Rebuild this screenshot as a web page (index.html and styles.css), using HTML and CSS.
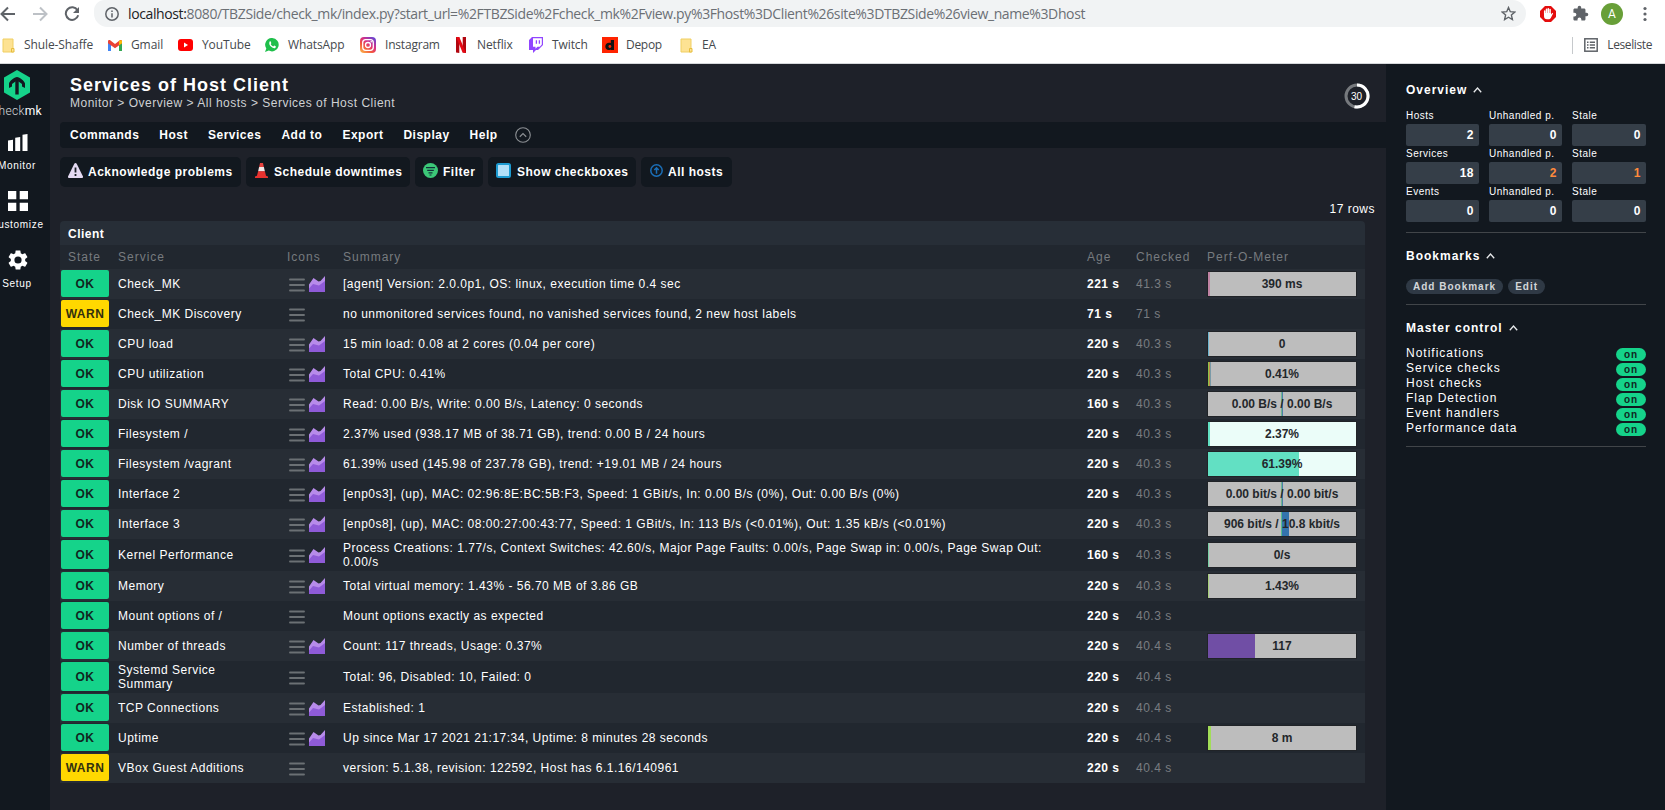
FILE: index.html
```html
<!DOCTYPE html>
<html lang="en">
<head>
<meta charset="utf-8">
<title>Services of Host Client</title>
<link rel="stylesheet" href="styles.css">
</head>
<body>
<svg width="0" height="0" class="defs">
  <symbol id="menu" viewBox="0 0 16 16"><path d="M1 2.500h14M1 8h14M1 13.500h14" stroke="#6b7074" stroke-width="1.900" stroke-linecap="round"/></symbol>
  <symbol id="graph" viewBox="0 0 16 16"><path d="M0 8.500L4.500 2l5 3.500 2-.5L16 0v16H0z" fill="#b78bea"/><path d="M0 12.500L4 8l6 1.500L16 5v11H0z" fill="#8f5bd8"/></symbol>
  <symbol id="caret" viewBox="0 0 9 6"><path d="M.8 5.200L4.500 1l3.700 4.200" fill="none" stroke="#e8eaec" stroke-width="1.300"/></symbol>
  <symbol id="folder" viewBox="0 0 13 15"><path d="M1 1h10v13H1z" fill="#fde293" stroke="#f0cf62"/><path d="M9.500 10.500h2.500v3.500h-2.500z" fill="#fde293" stroke="#e6bd3c"/></symbol>
</svg>

<header class="browser">
  <div class="toolbar">
    <svg class="nav-ic" width="16" height="16" viewBox="0 0 16 16"><path d="M15 8H2M8 1.500L1.500 8 8 14.500" fill="none" stroke="#5f6368" stroke-width="2"/></svg>
    <svg class="nav-ic" width="16" height="16" viewBox="0 0 16 16"><path d="M1 8h13M8 1.500L14.500 8 8 14.500" fill="none" stroke="#bdc1c6" stroke-width="2"/></svg>
    <svg class="nav-ic" width="16" height="16" viewBox="0 0 16 16"><path d="M13.500 4.300A6.300 6.300 0 1 0 14.200 9.300" fill="none" stroke="#5f6368" stroke-width="2"/><path d="M15 1v6H9z" fill="#5f6368"/></svg>
    <div class="omnibox">
      <svg width="14" height="14" viewBox="0 0 14 14"><circle cx="7" cy="7" r="6.200" fill="none" stroke="#5f6368" stroke-width="1.500"/><path d="M7 6.200v4.300M7 3.400v1.500" stroke="#5f6368" stroke-width="1.500"/></svg>
      <span class="url"><b>localhost:</b>8080/TBZSide/check_mk/index.py?start_url=%2FTBZSide%2Fcheck_mk%2Fview.py%3Fhost%3DClient%26site%3DTBZSide%26view_name%3Dhost</span>
      <svg class="star" width="15" height="15" viewBox="0 0 15 15"><path d="M7.500 1.500l1.800 4.200 4.500.4-3.400 3 1 4.400-3.900-2.300-3.900 2.300 1-4.400-3.400-3 4.500-.4z" fill="none" stroke="#5f6368" stroke-width="1.400"/></svg>
    </div>
    <div class="exts">
      <svg width="16" height="16" viewBox="0 0 16 16"><path d="M5 0h6l5 5v6l-5 5H5l-5-5V5z" fill="#e40d0d"/><path d="M4.700 8V5M6.500 7.500V3.300M8.300 7.500V2.800M10.100 7.500V3.600" stroke="#fff" stroke-width="1.500" stroke-linecap="round"/><path d="M4 7h7v1.500l1.300-1.700.8.6-2.300 4.600c-.5 1-1.300 1.300-2.400 1.300H7c-2 0-3-1.300-3-3z" fill="#fff"/></svg>
      <svg width="17" height="17" viewBox="0 0 24 24"><path d="M20.500 11H19V7c0-1.100-.9-2-2-2h-4V3.500a2.500 2.500 0 0 0-5 0V5H4c-1.100 0-2 .9-2 2v3.800h1.500a2.700 2.700 0 0 1 0 5.400H2V20c0 1.100.9 2 2 2h3.800v-1.500a2.700 2.700 0 0 1 5.400 0V22H17c1.100 0 2-.9 2-2v-4h1.500a2.500 2.500 0 0 0 0-5z" fill="#5f6368"/></svg>
      <span class="avatar">A</span>
      <svg width="4" height="16" viewBox="0 0 4 16"><circle cx="2" cy="2.500" r="1.600" fill="#5f6368"/><circle cx="2" cy="8" r="1.600" fill="#5f6368"/><circle cx="2" cy="13.500" r="1.600" fill="#5f6368"/></svg>
    </div>
  </div>
  <div class="bookmarks">
    <span class="bm bm-school"><svg width="13" height="15"><use href="#folder"/></svg>Shule-Shaffe</span>
    <span class="bm bm-gmail"><svg width="14" height="11" viewBox="0 0 14 11"><path d="M0 1.500V11h3V4z" fill="#4285f4"/><path d="M14 1.500V11h-3V4z" fill="#34a853"/><path d="M0 1.500C0 0 1.500-.3 2.500.5L7 4 11.500.5C12.500-.3 14 0 14 1.500v1.700L7 8.300 0 3.200z" fill="#ea4335"/><path d="M11 1v4.300l3-2.100V1.500C14 0 12.500-.3 11 1z" fill="#fbbc04"/></svg>Gmail</span>
    <span class="bm bm-youtube"><svg width="15" height="12" viewBox="0 0 15 12"><rect width="15" height="12" rx="3" fill="#f00"/><path d="M6 3.500v5L10 6z" fill="#fff"/></svg>YouTube</span>
    <span class="bm bm-whatsapp"><svg width="14" height="14" viewBox="0 0 14 14"><path d="M7.200 0a6.700 6.700 0 1 1-3.400 12.600L0 14l1.300-3.600A6.700 6.700 0 0 1 7.200 0z" fill="#1fbf4b"/><path d="M4.600 3.600c.4-.5 1-.4 1.200.1l.5 1.200c.1.400-.6.900-.6 1.200.4 1 1.500 2 2.500 2.300.4 0 .7-.9 1.100-.8l1.300.7c.6.300.2 1.200-.4 1.600-1 .6-2.700 0-4-1.100C4.600 7.600 3.600 5.600 4.600 3.600z" fill="#fff"/></svg>WhatsApp</span>
    <span class="bm bm-instagram"><svg width="16" height="16" viewBox="0 0 16 16"><defs><linearGradient id="ig" x1="0" y1="1" x2=".8" y2="0"><stop offset="0" stop-color="#fdc04a"/><stop offset=".4" stop-color="#f2543f"/><stop offset=".65" stop-color="#d62f86"/><stop offset="1" stop-color="#6a45d0"/></linearGradient></defs><rect width="16" height="16" rx="4" fill="url(#ig)"/><rect x="2.700" y="2.700" width="10.600" height="10.600" rx="3" fill="none" stroke="#fff" stroke-width="1.300"/><circle cx="8" cy="8" r="2.500" fill="none" stroke="#fff" stroke-width="1.300"/><circle cx="11.200" cy="4.800" r=".8" fill="#fff"/></svg>Instagram</span>
    <span class="bm bm-netflix"><svg width="10" height="16" viewBox="0 0 10 16"><path d="M0 0h3.300v16L0 15.600zM6.700 0H10v16l-3.300-.4z" fill="#b1060f"/><path d="M0 0h3.300L10 16l-3.400-.4z" fill="#e50914"/></svg>Netflix</span>
    <span class="bm bm-twitch"><svg width="14" height="16" viewBox="0 0 14 16"><path d="M3 0h11v8l-5 5H7l-3 3v-3H0V3z" fill="#9146ff"/><path d="M4 1.200h8.800v6.300l-2 2.200H8.500l-2 2v-2H4z" fill="#fff"/><path d="M7.400 3.300v3.500M10.400 3.300v3.500" stroke="#9146ff" stroke-width="1.300"/></svg>Twitch</span>
    <span class="bm bm-depop"><svg width="16" height="16" viewBox="0 0 16 16"><rect width="16" height="16" fill="#ff2300"/><path d="M8.800 3H12v10H8.800v-.6C6 14 3.300 12.300 3.300 9.400S6 4.900 8.800 6z" fill="#111"/><circle cx="7.900" cy="9.500" r="1.400" fill="#ff2300"/></svg>Depop</span>
    <span class="bm bm-ea"><svg width="13" height="15"><use href="#folder"/></svg>EA</span>
    <span class="reading"><svg width="14" height="14" viewBox="0 0 14 14"><rect x=".8" y=".8" width="12.400" height="12.400" fill="none" stroke="#5f6368" stroke-width="1.500"/><path d="M3 4.200h1.500M3 7h1.500M3 9.800h1.500M5.800 4.200H11M5.800 7H11M5.800 9.800H11" stroke="#5f6368" stroke-width="1.400"/></svg>Leseliste</span>
  </div>
</header>

<div class="app">
  <nav class="nav">
    <div class="nav-inner">
      <svg class="logo" width="26" height="30" viewBox="0 0 26 30"><path d="M13 0l13 7.500v15L13 30 0 22.500v-15z" fill="#15d38a"/><path d="M13 24.500V9" stroke="#12181f" stroke-width="3.400"/><path d="M5 18v-4.500C5 11.500 10.500 7 13 7s8 4.500 8 6.500V18l-3-1.500V14l-3.500-2.600h-3L8 14v2.500z" fill="#12181f"/></svg>
      <div class="brand">check<b>mk</b></div>
      <svg class="ic-monitor" width="20" height="17" viewBox="0 0 20 17"><path d="M0 6.500l5-.8V17H0zM7.200 3.700l5-.8V17h-5zM14.500.8l5-.8v17h-5z" fill="#fff"/></svg>
      <div class="nav-label">Monitor</div>
      <svg class="ic-custom" width="20" height="20" viewBox="0 0 20 20"><path d="M0 0h8.300v8.300H0zM11.700 0H20v8.300h-8.300zM0 11.700h8.300V20H0zM11.700 11.700H20V20h-8.300z" fill="#fff"/></svg>
      <div class="nav-label">Customize</div>
      <svg class="ic-setup" width="20" height="20" viewBox="2 2 20 20"><path d="M19.140 12.940c.040-.3.060-.610.060-.940 0-.320-.020-.640-.070-.940l2.030-1.580c.180-.140.230-.410.120-.610l-1.920-3.320c-.120-.220-.370-.290-.590-.220l-2.390.960c-.500-.380-1.030-.700-1.620-.940l-.360-2.540c-.040-.240-.240-.410-.480-.410h-3.840c-.240 0-.430.170-.470.410l-.360 2.540c-.590.240-1.130.570-1.620.940l-2.390-.960c-.220-.080-.470 0-.590.220L2.740 8.870c-.120.210-.080.470.120.610l2.030 1.580c-.050.3-.090.630-.090.940s.020.640.070.940l-2.030 1.580c-.180.140-.230.410-.120.610l1.920 3.320c.120.220.370.290.590.220l2.390-.960c.500.380 1.030.700 1.620.940l.36 2.540c.050.240.240.410.480.410h3.840c.240 0 .440-.170.470-.410l.360-2.540c.590-.240 1.130-.560 1.620-.940l2.390.960c.220.080.470 0 .590-.220l1.920-3.320c.120-.220.070-.470-.120-.610zM12 15.600A3.600 3.600 0 1 1 12 8.400a3.600 3.600 0 0 1 0 7.200z" fill="#fff"/></svg>
      <div class="nav-label">Setup</div>
    </div>
  </nav>

  <main class="main">
    <div class="head">
      <div>
        <h1>Services of Host Client</h1>
        <div class="crumbs">Monitor &gt; Overview &gt; All hosts &gt; Services of Host Client</div>
      </div>
      <svg class="timer" width="26" height="26" viewBox="0 0 26 26"><circle cx="13" cy="13" r="11" fill="none" stroke="#76797d" stroke-width="3"/><path d="M13 2A11 11 0 1 1 10.500 23.700" fill="none" stroke="#fff" stroke-width="3"/><text x="12.500" y="17.200">30</text></svg>
    </div>
    <div class="menubar">
      <span>Commands</span><span>Host</span><span>Services</span><span>Add to</span><span>Export</span><span>Display</span><span>Help</span>
      <svg width="16" height="16" viewBox="0 0 16 16"><circle cx="8" cy="8" r="7.300" fill="none" stroke="#8c9094" stroke-width="1.100"/><path d="M4.800 9.700L8 6.600l3.200 3.100" fill="none" stroke="#8c9094" stroke-width="1.200"/></svg>
    </div>
    <div class="actions">
      <span class="action a-ack"><svg width="15" height="15" viewBox="0 0 15 15"><path d="M7.500 0c.6 0 1 .3 1.300.9L15 13.500c.3.8 0 1.500-1 1.500H1c-1 0-1.300-.7-1-1.500L6.200.9C6.500.3 6.900 0 7.500 0z" fill="#e4daf2"/><path d="M7.500 4.500v5M7.500 11v2" stroke="#1b1f26" stroke-width="1.800"/></svg>Acknowledge problems</span>
      <span class="action a-down"><svg width="13" height="15" viewBox="0 0 13 15"><path d="M5 0h3l.9 4.300H4.100z" fill="#e8423f"/><path d="M4.100 4h4.800l1 4.500H3.100z" fill="#f1e8e8"/><path d="M3.100 8.200h6.800l1.100 4.600 2 .7V15H0v-1.500l2-.7z" fill="#e8322f"/></svg>Schedule downtimes</span>
      <span class="action a-filter"><svg width="15" height="15" viewBox="0 0 15 15"><circle cx="7.500" cy="7.500" r="7.500" fill="#3cc878"/><path d="M3 4.700h9M4.200 7.300h6.600M5.500 9.800h4M6.500 12h2" stroke="#12303a" stroke-width="1.200"/></svg>Filter</span>
      <span class="action a-check"><svg width="15" height="15" viewBox="0 0 15 15"><rect x="1" y="1" width="13" height="13" rx="1.500" fill="#b3e0f8" stroke="#1d9bd1" stroke-width="2"/></svg>Show checkboxes</span>
      <span class="action a-hosts"><svg width="13" height="13" viewBox="0 0 13 13"><circle cx="6.500" cy="6.500" r="5.700" fill="none" stroke="#1b6fb8" stroke-width="1.500"/><path d="M6.500 9.800V4M4.300 6l2.200-2.200L8.700 6" fill="none" stroke="#1b6fb8" stroke-width="1.500"/></svg>All hosts</span>
    </div>
    <div class="rowcount">17 rows</div>

    <table class="services">
      <colgroup><col class="c-state"><col class="c-service"><col class="c-icons"><col class="c-summary"><col class="c-age"><col class="c-checked"><col class="c-perf"></colgroup>
      <tr class="group"><th colspan="7">Client</th></tr>
      <tr class="cols"><th>State</th><th>Service</th><th>Icons</th><th>Summary</th><th>Age</th><th>Checked</th><th>Perf-O-Meter</th></tr>
      <tr class="odd"><td><i class="ok">OK</i></td><td>Check_MK</td><td class="icons"><svg><use href="#menu"/></svg><svg><use href="#graph"/></svg></td><td>[agent] Version: 2.0.0p1, OS: linux, execution time 0.4 sec</td><td class="age">221 s</td><td class="chk">41.3 s</td><td><div class="perf p-mk">390 ms</div></td></tr>
      <tr><td><i class="warn">WARN</i></td><td>Check_MK Discovery</td><td class="icons"><svg><use href="#menu"/></svg></td><td>no unmonitored services found, no vanished services found, 2 new host labels</td><td class="age">71 s</td><td class="chk">71 s</td><td></td></tr>
      <tr class="odd"><td><i class="ok">OK</i></td><td>CPU load</td><td class="icons"><svg><use href="#menu"/></svg><svg><use href="#graph"/></svg></td><td>15 min load: 0.08 at 2 cores (0.04 per core)</td><td class="age">220 s</td><td class="chk">40.3 s</td><td><div class="perf p-load">0</div></td></tr>
      <tr><td><i class="ok">OK</i></td><td>CPU utilization</td><td class="icons"><svg><use href="#menu"/></svg><svg><use href="#graph"/></svg></td><td>Total CPU: 0.41%</td><td class="age">220 s</td><td class="chk">40.3 s</td><td><div class="perf p-cpu">0.41%</div></td></tr>
      <tr class="odd"><td><i class="ok">OK</i></td><td>Disk IO SUMMARY</td><td class="icons"><svg><use href="#menu"/></svg><svg><use href="#graph"/></svg></td><td>Read: 0.00 B/s, Write: 0.00 B/s, Latency: 0 seconds</td><td class="age">160 s</td><td class="chk">40.3 s</td><td><div class="perf p-mid">0.00 B/s / 0.00 B/s</div></td></tr>
      <tr><td><i class="ok">OK</i></td><td>Filesystem /</td><td class="icons"><svg><use href="#menu"/></svg><svg><use href="#graph"/></svg></td><td>2.37% used (938.17 MB of 38.71 GB), trend: 0.00 B / 24 hours</td><td class="age">220 s</td><td class="chk">40.3 s</td><td><div class="perf p-fs1">2.37%</div></td></tr>
      <tr class="odd"><td><i class="ok">OK</i></td><td>Filesystem /vagrant</td><td class="icons"><svg><use href="#menu"/></svg><svg><use href="#graph"/></svg></td><td>61.39% used (145.98 of 237.78 GB), trend: +19.01 MB / 24 hours</td><td class="age">220 s</td><td class="chk">40.3 s</td><td><div class="perf p-fs2">61.39%</div></td></tr>
      <tr><td><i class="ok">OK</i></td><td>Interface 2</td><td class="icons"><svg><use href="#menu"/></svg><svg><use href="#graph"/></svg></td><td>[enp0s3], (up), MAC: 02:96:8E:BC:5B:F3, Speed: 1 GBit/s, In: 0.00 B/s (0%), Out: 0.00 B/s (0%)</td><td class="age">220 s</td><td class="chk">40.3 s</td><td><div class="perf p-mid">0.00 bit/s / 0.00 bit/s</div></td></tr>
      <tr class="odd"><td><i class="ok">OK</i></td><td>Interface 3</td><td class="icons"><svg><use href="#menu"/></svg><svg><use href="#graph"/></svg></td><td>[enp0s8], (up), MAC: 08:00:27:00:43:77, Speed: 1 GBit/s, In: 113 B/s (&lt;0.01%), Out: 1.35 kB/s (&lt;0.01%)</td><td class="age">220 s</td><td class="chk">40.3 s</td><td><div class="perf p-if3">906 bit/s / 10.8 kbit/s</div></td></tr>
      <tr class="tall"><td><i class="ok">OK</i></td><td>Kernel Performance</td><td class="icons"><svg><use href="#menu"/></svg><svg><use href="#graph"/></svg></td><td>Process Creations: 1.77/s, Context Switches: 42.60/s, Major Page Faults: 0.00/s, Page Swap in: 0.00/s, Page Swap Out: 0.00/s</td><td class="age">160 s</td><td class="chk">40.3 s</td><td><div class="perf p-kern">0/s</div></td></tr>
      <tr class="odd"><td><i class="ok">OK</i></td><td>Memory</td><td class="icons"><svg><use href="#menu"/></svg><svg><use href="#graph"/></svg></td><td>Total virtual memory: 1.43% - 56.70 MB of 3.86 GB</td><td class="age">220 s</td><td class="chk">40.3 s</td><td><div class="perf p-mem">1.43%</div></td></tr>
      <tr><td><i class="ok">OK</i></td><td>Mount options of /</td><td class="icons"><svg><use href="#menu"/></svg></td><td>Mount options exactly as expected</td><td class="age">220 s</td><td class="chk">40.3 s</td><td></td></tr>
      <tr class="odd"><td><i class="ok">OK</i></td><td>Number of threads</td><td class="icons"><svg><use href="#menu"/></svg><svg><use href="#graph"/></svg></td><td>Count: 117 threads, Usage: 0.37%</td><td class="age">220 s</td><td class="chk">40.4 s</td><td><div class="perf p-thr">117</div></td></tr>
      <tr class="tall"><td><i class="ok">OK</i></td><td>Systemd Service<br>Summary</td><td class="icons"><svg><use href="#menu"/></svg></td><td>Total: 96, Disabled: 10, Failed: 0</td><td class="age">220 s</td><td class="chk">40.4 s</td><td></td></tr>
      <tr class="odd"><td><i class="ok">OK</i></td><td>TCP Connections</td><td class="icons"><svg><use href="#menu"/></svg><svg><use href="#graph"/></svg></td><td>Established: 1</td><td class="age">220 s</td><td class="chk">40.4 s</td><td></td></tr>
      <tr><td><i class="ok">OK</i></td><td>Uptime</td><td class="icons"><svg><use href="#menu"/></svg><svg><use href="#graph"/></svg></td><td>Up since Mar 17 2021 21:17:34, Uptime: 8 minutes 28 seconds</td><td class="age">220 s</td><td class="chk">40.4 s</td><td><div class="perf p-up">8 m</div></td></tr>
      <tr class="odd"><td><i class="warn">WARN</i></td><td>VBox Guest Additions</td><td class="icons"><svg><use href="#menu"/></svg></td><td>version: 5.1.38, revision: 122592, Host has 6.1.16/140961</td><td class="age">220 s</td><td class="chk">40.4 s</td><td></td></tr>
    </table>
  </main>

  <aside class="side">
    <section class="snap overview">
      <h2>Overview <svg width="9" height="6"><use href="#caret"/></svg></h2>
      <div class="tiles">
        <div>Hosts<b>2</b></div><div>Unhandled p.<b>0</b></div><div>Stale<b>0</b></div>
        <div>Services<b>18</b></div><div>Unhandled p.<b class="hot">2</b></div><div>Stale<b class="hot">1</b></div>
        <div>Events<b>0</b></div><div>Unhandled p.<b>0</b></div><div>Stale<b>0</b></div>
      </div>
    </section>
    <section class="snap marks">
      <h2>Bookmarks <svg width="9" height="6"><use href="#caret"/></svg></h2>
      <div class="pills"><span>Add Bookmark</span><span>Edit</span></div>
    </section>
    <section class="snap master">
      <h2>Master control <svg width="9" height="6"><use href="#caret"/></svg></h2>
      <div class="switches">
        <div>Notifications<b>on</b></div>
        <div>Service checks<b>on</b></div>
        <div>Host checks<b>on</b></div>
        <div>Flap Detection<b>on</b></div>
        <div>Event handlers<b>on</b></div>
        <div>Performance data<b>on</b></div>
      </div>
    </section>
  </aside>
</div>
</body>
</html>
```

FILE: styles.css
```css
* { box-sizing: border-box; }
body {
  margin: 0;
  width: 1665px;
  height: 810px;
  overflow: hidden;
  background: #fff;
  color: #fff;
  font: 12px/14px "Liberation Sans", Arial, sans-serif;
  letter-spacing: .5px;
}
svg { display: block; flex: none; }
.defs { position: absolute; }

/* browser chrome */
.browser {
  height: 64px;
  border-bottom: 1px solid #d6d8db;
  color: #45494d;
  font-family: "Open Sans", "Noto Sans", sans-serif;
  letter-spacing: 0;
}
.toolbar { display: flex; align-items: center; height: 27px; }
.nav-ic { margin-right: 16px; }
.nav-ic:nth-child(3) { margin-right: 14px; }
.omnibox {
  display: flex;
  align-items: center;
  width: 1432px;
  height: 27px;
  padding: 0 10px 0 11px;
  background: #f1f3f4;
  border-radius: 11px 14px 14px 14px;
}
.url { margin-left: 9px; font-size: 14px; line-height: 18px; color: #6b6f74; letter-spacing: -.38px; white-space: nowrap; }
.url b { font-weight: 400; color: #202124; }
.star { margin-left: auto; }
.exts { display: flex; align-items: center; padding-left: 14px; }
.exts svg:nth-child(2) { margin: 0 12px 0 16px; }
.avatar {
  width: 22px; height: 22px; margin-right: 20px;
  border-radius: 50%; background: #689f38; color: #fff;
  text-align: center; font: 12px/22px Roboto, sans-serif;
}
.bookmarks { display: flex; align-items: center; height: 36px; padding-left: 2px; font-size: 12px; letter-spacing: -.1px; }
.bm { display: flex; align-items: center; white-space: nowrap; }
.bm svg { margin-right: 9px; }
.bm-school { width: 106px; }
.bm-gmail { width: 70px; }
.bm-youtube { width: 87px; }
.bm-whatsapp { width: 95px; }
.bm-instagram { width: 96px; letter-spacing: -.2px; }
.bm-netflix { width: 73px; }
.bm-twitch { width: 73px; }
.bm-depop { width: 78px; letter-spacing: -.3px; }
.bm-netflix svg { margin-right: 11px; }
.bm-depop svg { margin-right: 8px; }
.reading {
  display: flex; align-items: center; gap: 9px;
  height: 17px; margin-left: auto; padding: 0 13px 0 11px;
  border-left: 1px solid #c6c9cc; letter-spacing: -.4px;
}

/* application frame */
.app { display: flex; height: 746px; background: #1e2129; }
.nav { width: 50px; overflow: hidden; background: #12181f; }
.nav-inner { display: flex; flex-direction: column; align-items: center; width: 66px; margin-left: -16px; padding-top: 6px; }
.brand { margin-top: 3px; font: 300 12px/16px Roboto, sans-serif; letter-spacing: .3px; color: #d8dadd; }
.brand b { font-weight: 400; color: #fff; }
.ic-monitor { margin: 15px 0 8px 1px; }
.ic-custom { margin: 18px 0 7px 1px; }
.ic-setup { margin: 18px 0 7px 1px; }
.nav-label { font-size: 10px; line-height: 14px; letter-spacing: .7px; }

.main { width: 1336px; padding-left: 10px; }
.head { display: flex; justify-content: space-between; height: 58px; padding: 10px 16px 0 10px; }
h1 { margin: 0; font-size: 18px; line-height: 22px; letter-spacing: 1px; }
.crumbs { line-height: 14px; color: #cfd1d4; }
.timer { margin-top: 9px; }
.timer text { fill: #fff; font-size: 10px; letter-spacing: 0; text-anchor: middle; }
.menubar {
  display: flex; align-items: center; gap: 20px; height: 26px; padding: 0 10px;
  background: #12181f; font-weight: 700; border-radius: 4px 0 0 4px;
}
.menubar svg { margin-left: -3px; }
.actions { display: flex; gap: 5px; margin-top: 9px; }
.action {
  display: flex; align-items: center; height: 30px; padding-left: 8px;
  border-radius: 5px; background: #12181f; font-weight: 700; white-space: nowrap;
}
.action svg { margin: -3px 5px 0 0; }
.a-ack { width: 181px; }
.a-down { width: 164px; }
.a-down svg { margin: -3px 6px 0 1px; }
.a-filter { width: 68px; }
.a-check { width: 148px; }
.a-check svg { margin-right: 6px; }
.a-hosts { width: 91px; }
.a-hosts svg { margin: -3px 5px 0 1px; }
.rowcount { height: 34px; padding: 15px 11px 0 0; text-align: right; }

/* service table */
.services { width: 1305px; table-layout: fixed; border-collapse: collapse; }
.c-state { width: 50px; } .c-service { width: 169px; } .c-icons { width: 56px; }
.c-summary { width: 744px; } .c-age { width: 49px; } .c-checked { width: 71px; } .c-perf { width: 166px; }
td, th { padding: 0 0 0 8px; text-align: left; vertical-align: middle; height: 30px; }
td:first-child { padding: 1px 1px 2px 1px; }
td:nth-child(4) { padding-right: 35px; }
tr { background: #21272f; }
tr.odd { background: #272d35; }
tr.tall td { height: 32px; }
.services .group { background: #272e37; }
.group th { height: 24px; padding: 1px 0 0 8px; border-radius: 4px 4px 0 0; letter-spacing: .5px; }
.cols th { height: 24px; font-weight: 400; letter-spacing: 1px; color: #777b7f; }
td i {
  display: flex; align-items: center; justify-content: center; width: 48px; height: 27px;
  border-radius: 2px; color: #10261f; font-style: normal; font-weight: 700;
}
.tall i { height: 29px; }
.ok { background: #15d38a; }
td .warn { background: #ffd800; color: #33300f; }
.icons { white-space: nowrap; padding-left: 8px; font-size: 0; }
.icons svg { display: inline-block; width: 16px; height: 16px; margin: 1px 4px 0 2px; vertical-align: middle; }
.icons svg + svg { margin: 0; }
.age { font-weight: 700; }
.chk { color: #7a7d81; }
.perf {
  width: 150px; height: 26px; border: 1px solid #202327; background: #bdbdbd;
  color: #23272b; font-weight: 700; line-height: 24px; letter-spacing: 0; text-align: center;
}
.p-mk { background: linear-gradient(90deg, #c084a4 2px, #bdbdbd 2px); }
.p-load { background: linear-gradient(90deg, #6cb4cf 1px, #bdbdbd 1px); }
.p-cpu { background: linear-gradient(90deg, #8bc34a 1px, #c08a4c 1px 2px, #7a9aa8 2px 3px, #bdbdbd 3px); }
.p-mid { background: linear-gradient(90deg, #bdbdbd 73px, #6fb592 73px 74px, #4d7fa8 74px 75px, #bdbdbd 75px); }
.p-if3 { background: linear-gradient(90deg, #bdbdbd 73px, #55bd8e 73px 74px, #3474ad 74px 81px, #bdbdbd 81px); }
.p-fs1 { background: linear-gradient(90deg, #62e0c3 2px, #ebfdf9 2px); }
.p-fs2 { background: linear-gradient(90deg, #62e0c3 91px, #ebfdf9 91px); }
.p-kern { background: linear-gradient(90deg, #76cfa5 1px, #bdbdbd 1px); }
.p-mem { background: linear-gradient(90deg, #a5cf7a 1px, #bdbdbd 1px); }
.p-thr { background: linear-gradient(90deg, #704ea5 47px, #bdbdbd 47px); }
.p-up { background: linear-gradient(90deg, #a1dd58 3px, #bdbdbd 3px); }

/* right sidebar */
.side { width: 279px; padding: 0 19px 0 20px; background: #12181f; }
.snap { border-bottom: 1px solid #414549; }
h2 { display: flex; align-items: center; gap: 6px; margin: 0; font-size: 12px; line-height: 14px; letter-spacing: 1px; }
.overview { height: 169px; padding-top: 19px; }
.marks { height: 72px; padding-top: 16px; }
.master { height: 142px; padding-top: 16px; }
.tiles { display: grid; grid-template-columns: 73px 73px 74px; column-gap: 10px; margin-top: 11px; font-size: 10px; line-height: 16px; }
.tiles > div { height: 38px; }
.tiles b {
  display: block; height: 22px; padding-right: 5px; border-radius: 2px;
  background: #353e48; font-size: 12px; line-height: 22px; text-align: right;
}
.tiles .hot { color: #ff8a3c; }
.pills { display: flex; gap: 5px; margin-top: 16px; font-size: 10px; font-weight: 700; letter-spacing: 1px; color: #d3d6d9; }
.pills span { height: 15px; padding: 0 7px; border-radius: 8px; background: #2f3945; line-height: 15px; }
.switches { margin-top: 11px; letter-spacing: 1px; }
.switches > div { display: flex; justify-content: space-between; height: 15px; line-height: 14px; }
.switches b {
  width: 30px; height: 13px; margin-top: 2px; border-radius: 7px; background: #15d38a;
  color: #10261f; font-size: 10px; font-weight: 700; line-height: 13px; text-align: center;
}
```
